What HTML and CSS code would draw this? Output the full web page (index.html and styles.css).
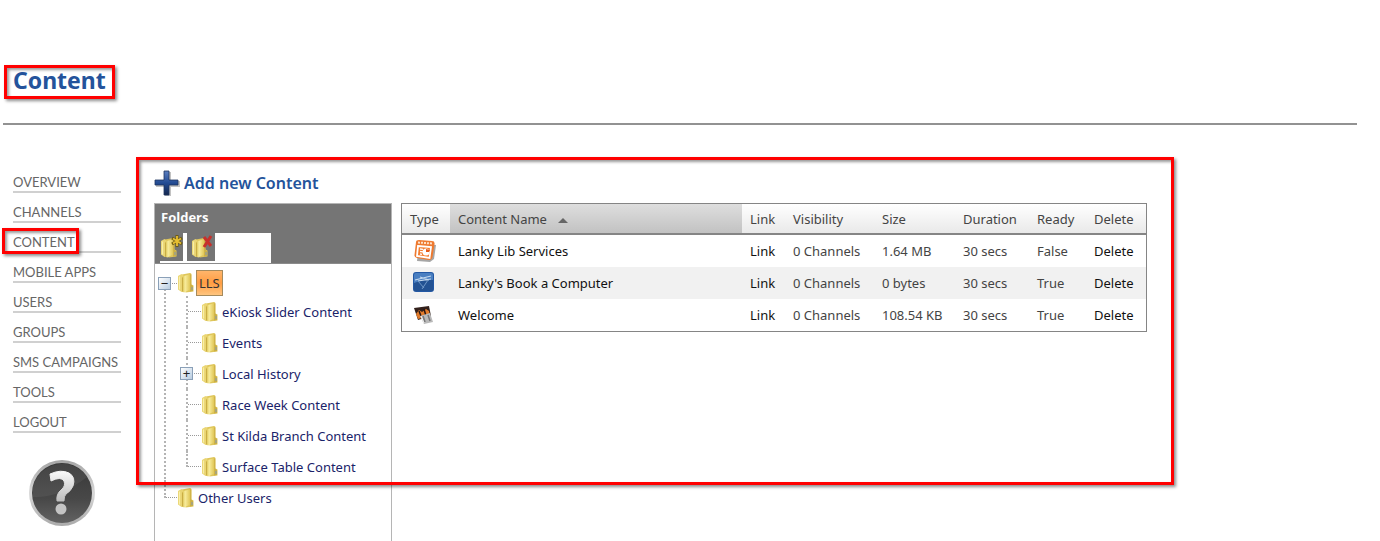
FILE: index.html
```html
<!DOCTYPE html>
<html lang="en">
<head>
<meta charset="utf-8">
<title>Content</title>
<link rel="stylesheet" href="styles.css">
</head>
<body>
<svg class="defs" aria-hidden="true">
  <defs>
    <linearGradient id="gold" x1="0" x2="1"><stop offset="0" stop-color="#dcc350"/><stop offset=".35" stop-color="#f8ec9c"/><stop offset="1" stop-color="#e0c656"/></linearGradient>
    <linearGradient id="blue" x1="0" y1="0" x2="0" y2="1"><stop offset="0" stop-color="#5b7fc0"/><stop offset=".5" stop-color="#234b93"/><stop offset="1" stop-color="#14264d"/></linearGradient>
    <symbol id="folder" viewBox="0 0 16 20">
      <path d="M4 1.500l8-1.500q1.500 0 1.500 1.500v10l2 1v6l-8 1z" fill="#dfc65a"/>
      <path d="M12 1.500l1.200 0v10l1.800 1.500v5l-3 .5z" fill="#ccb045"/>
      <path d="M0 3l3.500-2 2 1.500v16l-2 .5-3.500-2.500z" fill="#ead573"/>
      <path d="M1.500 3.500v13" stroke="#f8eea9" stroke-width="1.200"/>
      <path d="M4.500 4.500q0-1.300 1.300-1.600l5.400-1.400q1 0 1 1v14l-6 3-1.700-.8z" fill="url(#gold)"/>
      <path d="M4.500 4.500v14" stroke="#bd9f38" stroke-width=".7"/>
      <path d="M14 14v3" stroke="#8f9da0" stroke-width="1.200"/>
    </symbol>
  </defs>
</svg>

<header class="page-header">
  <h1 class="page-title marked">Content</h1>
</header>

<div class="layout">
  <nav class="sidebar" aria-label="Main">
    <ul class="menu">
      <li><a href="#">OVERVIEW</a></li>
      <li><a href="#">CHANNELS</a></li>
      <li class="current"><a href="#">CONTENT</a></li>
      <li><a href="#">MOBILE APPS</a></li>
      <li><a href="#">USERS</a></li>
      <li><a href="#">GROUPS</a></li>
      <li><a href="#">SMS CAMPAIGNS</a></li>
      <li><a href="#">TOOLS</a></li>
      <li><a href="#">LOGOUT</a></li>
    </ul>
    <a class="help" href="#" aria-label="Help">
      <svg width="68" height="68" viewBox="0 0 68 68">
        <defs>
          <linearGradient id="rim" x1="0" y1="0" x2="0" y2="1"><stop offset="0" stop-color="#a5a5a5"/><stop offset=".5" stop-color="#d8d8d8"/><stop offset="1" stop-color="#aaa"/></linearGradient>
          <linearGradient id="disc" x1="0" y1="0" x2="0" y2="1"><stop offset="0" stop-color="#383838"/><stop offset=".6" stop-color="#484848"/><stop offset="1" stop-color="#626262"/></linearGradient>
          <linearGradient id="mark" x1="0" y1="0" x2="0" y2="1"><stop offset="0" stop-color="#fafafa"/><stop offset="1" stop-color="#bdbdbd"/></linearGradient>
        </defs>
        <circle cx="34" cy="34" r="33" fill="url(#rim)"/>
        <circle cx="34" cy="34" r="30" fill="url(#disc)"/>
        <path d="M5 38Q32 39 59 18A30 30 0 0 0 5 28z" fill="#fff" opacity=".06"/>
        <path d="M22 15Q33 10 41 14Q48 18 45 27Q43 32 38 35Q36 37 36 42H29Q28 35 33 31Q38 27 36 22Q33 17 23 22z" fill="url(#mark)" stroke="url(#mark)"/>
        <circle cx="33" cy="50" r="5.500" fill="#c4c4c4"/>
      </svg>
    </a>
  </nav>

  <main class="main">
    <a class="add" href="#">
      <svg width="26" height="26" viewBox="0 0 26 26"><path d="M11 2h6v9h9v6h-9v9h-6v-9H2v-6h9z" fill="#999" opacity=".6"/><path d="M10 1h5v9h9v5h-9v10h-5V15H1v-5h9z" fill="url(#blue)" stroke="#20365f" stroke-width=".8"/></svg>
      <span>Add new Content</span>
    </a>
    <div class="panels">
      <section class="folders">
        <header class="folders-head">
          <h2>Folders</h2>
          <div class="tools">
            <button class="tool" type="button" aria-label="New folder">
              <svg width="23" height="28" viewBox="0 0 23 28"><use href="#folder" x="1" y="5" width="16" height="20"/><path d="M17 2v12M12 5l10 6M12 11l10-6" stroke="#6d5a13" stroke-width="3"/><path d="M17 3v10M13 5.500l8 5M13 10.500l8-5" stroke="#e8c033" stroke-width="1.800"/></svg>
            </button>
            <button class="tool" type="button" aria-label="Delete folder">
              <svg width="28" height="28" viewBox="0 0 28 28"><use href="#folder" x="5" y="5" width="16" height="20"/><path d="M17 4l7 9M24 3l-7 11" stroke="#c7302b" stroke-width="3"/></svg>
            </button>
          </div>
        </header>
        <ul class="tree">
          <li>
            <div class="node root"><button class="toggle" type="button" aria-label="Collapse LLS">−</button><svg class="icon"><use href="#folder"/></svg><a class="selected" href="#">LLS</a></div>
            <ul>
              <li><div class="node"><svg class="icon"><use href="#folder"/></svg><a href="#">eKiosk Slider Content</a></div></li>
              <li><div class="node"><svg class="icon"><use href="#folder"/></svg><a href="#">Events</a></div></li>
              <li><div class="node"><button class="toggle" type="button" aria-label="Expand Local History">+</button><svg class="icon"><use href="#folder"/></svg><a href="#">Local History</a></div></li>
              <li><div class="node"><svg class="icon"><use href="#folder"/></svg><a href="#">Race Week Content</a></div></li>
              <li><div class="node"><svg class="icon"><use href="#folder"/></svg><a href="#">St Kilda Branch Content</a></div></li>
              <li><div class="node"><svg class="icon"><use href="#folder"/></svg><a href="#">Surface Table Content</a></div></li>
            </ul>
          </li>
          <li><div class="node"><svg class="icon"><use href="#folder"/></svg><a href="#">Other Users</a></div></li>
        </ul>
      </section>

      <table class="grid">
        <colgroup><col class="c-type"><col><col class="c-link"><col class="c-vis"><col class="c-size"><col class="c-dur"><col class="c-ready"><col class="c-del"></colgroup>
        <thead>
          <tr><th>Type</th><th class="sorted">Content Name <span class="arrow"></span></th><th>Link</th><th>Visibility</th><th>Size</th><th>Duration</th><th>Ready</th><th>Delete</th></tr>
        </thead>
        <tbody>
          <tr>
            <td class="type"><svg width="26" height="24" viewBox="0 0 26 24"><path d="M7 4l17 2-2 14-4 3-13-1z" fill="#777" opacity=".65"/><path d="M4 3Q4 1 7 1l13 1q3 0 2.500 3l-2 13q-.5 3-3.500 3L5 19q-3-1-2.500-3z" fill="#ee7a30"/><path d="M6 3.500l14 1" stroke="#ffe1c8" stroke-width="2" stroke-dasharray="2 1"/><path d="M6 7l13 1-1.500 11-12.500-2z" fill="#f47b2c" stroke="#fff" stroke-width="1.800"/><path d="M8 10l3 .3M8 12.500l3 .3M8 15l2 .3" stroke="#fff" stroke-width="1.300"/><circle cx="14" cy="13" r="3.500" fill="#fff"/><path d="M14 13v-3l4 1-1 2z" fill="#e45b1c"/></svg></td>
            <td class="strong">Lanky Lib Services</td><td class="strong"><a href="#">Link</a></td><td>0 Channels</td><td>1.64 MB</td><td>30 secs</td><td>False</td><td class="strong"><a href="#">Delete</a></td>
          </tr>
          <tr>
            <td class="type"><svg width="26" height="24" viewBox="0 0 26 24"><rect x="1" y="1" width="21" height="20" rx="3" fill="#2358a4"/><rect x="2" y="2" width="19" height="18" rx="2" fill="#4a7fc1"/><path d="M2 12q9-4 19-3v11H2z" fill="#235293"/><path d="M3 9l16-4M6 10l13-2M8 6l9 3" stroke="#c5d9ee" stroke-width="1.200"/><path d="M6 10l6 7M16 9l-6 9" stroke="#6f98c8"/></svg></td>
            <td class="strong">Lanky's Book a Computer</td><td class="strong"><a href="#">Link</a></td><td>0 Channels</td><td>0 bytes</td><td>30 secs</td><td>True</td><td class="strong"><a href="#">Delete</a></td>
          </tr>
          <tr>
            <td class="type"><svg width="26" height="24" viewBox="0 0 26 24"><path d="M2 5l15-2 2 10-13 4z" fill="#32201b"/><path d="M4 11l3-4 3 2 4-3 3 2 1 5-12 3z" fill="#e27b2a"/><path d="M7 8l2 5M12 6l2 7" stroke="#291713" stroke-width="1.500"/><path d="M8 13l10-3 3 9-9 2z" fill="#b9b9b9"/><path d="M11 13l2 6M16 12l2 6" stroke="#777" stroke-width="1.500"/><path d="M9 13l3 7" stroke="#f4f4f4"/></svg></td>
            <td class="strong">Welcome</td><td class="strong"><a href="#">Link</a></td><td>0 Channels</td><td>108.54 KB</td><td>30 secs</td><td>True</td><td class="strong"><a href="#">Delete</a></td>
          </tr>
        </tbody>
      </table>
    </div>
    <div class="callout" aria-hidden="true"></div>
  </main>
</div>
</body>
</html>
```
FILE: styles.css
```css
* { box-sizing: border-box; }
body { margin: 0; background: #fff; color: #444; font: 13px/20px "Noto Sans", sans-serif; }
a { color: inherit; text-decoration: none; }
ul { list-style: none; margin: 0; padding: 0; }
button { border: 0; padding: 0; font: inherit; cursor: pointer; }
.defs { position: absolute; width: 0; height: 0; }

.page-header { display: flex; margin: 0 23px 0 3px; padding: 65px 0 24px 1px; border-bottom: 2px solid #929292; }
.page-title { margin: 0; padding: 0 6px 4px 6px; color: #24539b; font: bold 23px/24px "Noto Sans", sans-serif; }
.marked, .callout, .current::after { border: 3px solid #f00; box-shadow: 2px 2px 3px rgba(0,0,0,.45), inset 2px 2px 3px rgba(0,0,0,.4); }

.layout { display: flex; align-items: stretch; padding-top: 33px; }
.sidebar { flex: none; width: 136px; padding: 13px 15px 0 13px; }
.menu li { position: relative; height: 30px; }
.menu a { display: block; height: 22px; padding-top: 1px; border-bottom: 2px solid #d0d0d0; color: #666; font: 13px/20px Lato, sans-serif; white-space: nowrap; }
.current::after { content: ""; position: absolute; inset: -3px 42px 7px -11px; }
.help { display: block; width: 68px; margin: 18px 0 0 15px; }
.help svg { display: block; }

.main { position: relative; flex: 1; min-width: 0; padding: 12px 233px 0 18px; }
.add { display: flex; align-items: center; gap: 4px; height: 26px; color: #24539b; font: 600 16px/24px "Noto Sans", sans-serif; }
.panels { display: flex; align-items: flex-start; gap: 9px; padding-top: 7px; }
.callout { position: absolute; top: -1px; left: 0; right: 206px; height: 328px; pointer-events: none; }

.folders { flex: none; width: 238px; padding-bottom: 28px; border: 1px solid #b5b5b5; border-bottom: 0; }
.folders-head { height: 60px; padding: 3px 0 0 5px; background: #757575; border-bottom: 1px solid #8b8b8b; }
.folders h2 { margin: 0 0 6px; padding-left: 1px; color: #fff; font: bold 13px/20px "Open Sans", sans-serif; }
.tools { display: flex; gap: 4px; width: 111px; height: 30px; background: #fff; }
.tool { width: 23px; height: 28px; background: #757575; }
.tool + .tool { width: 28px; }
.tool svg { display: block; }

.tree { padding: 6px 0 0 1px; color: #1a2369; }
.tree li { position: relative; padding-left: 22px; }
.tree li li { padding-left: 24px; }
.tree li::before { content: ""; position: absolute; left: 8px; top: 0; bottom: 0; border-left: 2px dotted #b4b4b4; }
.tree > li:first-child::before { top: 16px; }
.tree li:last-child::before { bottom: auto; height: 16px; }
.node { display: flex; align-items: center; height: 31px; }
.root { height: 26px; }
.node::before { content: ""; position: absolute; left: 10px; top: 15px; width: 13px; border-top: 1px dotted #999; }
.root::before { top: 13px; }
.icon { position: relative; width: 16px; height: 20px; margin-right: 2px; }
.node a { padding: 0 2px; line-height: 24px; white-space: nowrap; }
.node .selected { border: 1px solid #a58a5d; background: linear-gradient(#ffb56b, #ff9d42 50%, #ffc57f); color: #333; }
.toggle { position: absolute; left: 2px; top: 9px; width: 13px; height: 13px; border: 1px solid #8aa0b8; background: linear-gradient(135deg, #fff, #b8cce0); color: #222; font: 13px/10px "Liberation Sans", sans-serif; }
.root .toggle { top: 7px; }

.grid { flex: 1; min-width: 0; table-layout: fixed; border-collapse: separate; border-spacing: 0; border: 1px solid #858585; }
.grid th { height: 31px; padding: 0 8px; border-bottom: 2px solid #858585; background: linear-gradient(#fff, #e9e9e9); text-align: left; font-weight: 400; white-space: nowrap; }
.grid .sorted { background: linear-gradient(#dedede, #c2c2c2); }
.grid td { height: 32px; padding: 0 8px; white-space: nowrap; }
.grid tbody tr:nth-child(2) { background: #f1f1f1; }
.grid .strong { color: #111; }
.grid .type { padding: 0 0 0 10px; }
.type svg { display: block; }
.arrow { display: inline-block; margin-left: 8px; border: 5px solid transparent; border-top: 0; border-bottom-color: #666; vertical-align: 1px; }
.c-type { width: 48px; }
.c-link { width: 43px; }
.c-vis { width: 89px; }
.c-size { width: 81px; }
.c-dur { width: 74px; }
.c-ready { width: 57px; }
.c-del { width: 60px; }
```
